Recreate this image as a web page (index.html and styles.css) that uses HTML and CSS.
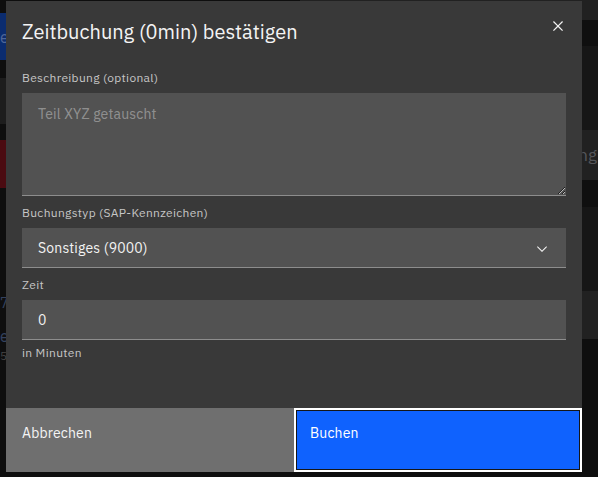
FILE: index.html
```html
<!DOCTYPE html>
<html lang="de">
<head>
    <meta charset="UTF-8">
    <meta name="viewport" content="width=device-width, initial-scale=1.0">
    <title>Zeitbuchung</title>
    <link rel="stylesheet" href="styles.css">
</head>
<body>
    <div class="page">
        <aside class="side">
            <div class="side-btn side-btn-primary"><span>e</span></div>
            <div class="side-field"></div>
            <div class="side-btn side-btn-danger"></div>
            <div class="side-meta">
                <span class="meta-num">7</span>
                <span class="meta-title">e</span>
                <span class="meta-sub">5</span>
            </div>
        </aside>
        <section class="list">
            <div class="list-row row-head"></div>
            <div class="list-row row-dark"></div>
            <div class="list-row row-mid"></div>
            <div class="list-row row-light"><span class="row-text">ng</span></div>
            <div class="list-row row-dark row-thin"></div>
            <div class="list-row row-mid"></div>
            <div class="list-row row-light row-short"></div>
        </section>
    </div>

    <div class="overlay">
        <div class="modal" role="dialog" aria-modal="true">
            <header class="modal-header">
                <h2 class="modal-title">Zeitbuchung (0min) bestätigen</h2>
                <button class="modal-close" aria-label="Schließen">
                    <svg width="20" height="20" viewBox="0 0 32 32" aria-hidden="true">
                        <path d="M24 9.4 22.6 8 16 14.6 9.4 8 8 9.4 14.6 16 8 22.6 9.4 24 16 17.4 22.6 24 24 22.6 17.4 16z" fill="currentColor"/>
                    </svg>
                </button>
            </header>

            <form class="modal-body" id="bookingForm">
                <div class="form-item">
                    <label class="form-label" for="description">Beschreibung (optional)</label>
                    <textarea class="field field-area" id="description" placeholder="Teil XYZ getauscht"></textarea>
                </div>

                <div class="form-item">
                    <label class="form-label" for="bookingType">Buchungstyp (SAP-Kennzeichen)</label>
                    <div class="select-wrap">
                        <select class="field field-select" id="bookingType">
                            <option value="9000">Sonstiges (9000)</option>
                        </select>
                        <svg class="select-chevron" width="16" height="16" viewBox="0 0 16 16" aria-hidden="true">
                            <path d="M8 11 3 6l.7-.7L8 9.6l4.3-4.3.7.7z" fill="currentColor"/>
                        </svg>
                    </div>
                </div>

                <div class="form-item">
                    <label class="form-label" for="minutes">Zeit</label>
                    <input class="field" type="number" id="minutes" value="0">
                    <div class="form-helper">in Minuten</div>
                </div>
            </form>

            <footer class="modal-footer">
                <button class="btn btn-secondary" type="button">Abbrechen</button>
                <button class="btn btn-primary is-focused" type="submit" form="bookingForm">Buchen</button>
            </footer>
        </div>
    </div>
</body>
</html>
```

FILE: styles.css
```css
* {
    box-sizing: border-box;
}

body {
    margin: 0;
    background-color: #0e0e0e;
    color: #f4f4f4;
    font-family: 'IBM Plex Sans', Roboto, 'Liberation Sans', sans-serif;
}

/* page behind the dialog */
.page {
    display: flex;
    height: 477px;
    overflow: hidden;
}

.side {
    width: 300px;
    padding: 13px 0 0 0;
    display: flex;
    flex-direction: column;
    align-items: flex-start;
}

.side-btn {
    width: 200px;
    display: flex;
    align-items: center;
}

.side-btn-primary {
    height: 47px;
    background: #0b2c6f;
    color: #4f6696;
    font-size: 16px;
}

.side-field {
    width: 200px;
    height: 46px;
    margin-top: 18px;
    background: #1d1d1d;
}

.side-btn-danger {
    height: 48px;
    margin-top: 16px;
    background: #4b0b11;
}

.side-meta {
    margin-top: 108px;
    display: flex;
    flex-direction: column;
    color: #34425f;
    font-size: 14px;
    line-height: 1;
}

.meta-title {
    margin-top: 18px;
    font-size: 16px;
}

.meta-sub {
    margin-top: 6px;
    font-size: 12px;
    color: #474747;
}

.list {
    flex: 1;
    display: flex;
    flex-direction: column;
}

.list-row {
    height: 84px;
    display: flex;
    align-items: center;
    justify-content: flex-end;
}

.row-head {
    height: 20px;
    background: #212121;
}

.row-dark {
    height: 26px;
    background: #0f0f0f;
}

.row-thin {
    height: 27px;
}

.row-mid {
    background: #161616;
}

.row-light {
    height: 50px;
    background: #212121;
}

.row-short {
    height: 48px;
}

.row-text {
    color: #55565a;
    font-size: 17px;
    margin-right: 1px;
}

/* dialog */
.overlay {
    position: fixed;
    inset: 0;
    padding: 1px 16px 5px 6px;
}

.modal {
    height: 471px;
    width: 576px;
    background: #393939;
    display: flex;
    flex-direction: column;
}

.modal-header {
    display: flex;
    justify-content: space-between;
    align-items: flex-start;
    padding: 17px 16px 0 16px;
}

.modal-title {
    margin: 0;
    font-size: 20px;
    line-height: 28px;
    font-weight: 400;
    color: #f4f4f4;
}

.modal-close {
    width: 32px;
    height: 32px;
    margin: -8px -8px 0 0;
    padding: 0;
    border: none;
    background: transparent;
    color: #f4f4f4;
    display: flex;
    align-items: center;
    justify-content: center;
    cursor: pointer;
}

.modal-body {
    padding: 24px 16px 0 16px;
    display: flex;
    flex-direction: column;
    gap: 9px;
}

.form-item {
    display: flex;
    flex-direction: column;
}

.form-label {
    font-size: 12px;
    line-height: 16px;
    letter-spacing: 0.32px;
    color: #c6c6c6;
    margin-bottom: 7px;
}

.field {
    width: 100%;
    height: 40px;
    padding: 0 16px;
    border: none;
    border-bottom: 1px solid #8d8d8d;
    background: #525252;
    color: #f4f4f4;
    font: inherit;
    font-size: 14px;
    letter-spacing: 0.16px;
    outline: none;
    appearance: none;
    -moz-appearance: textfield;
}

.field::-webkit-outer-spin-button,
.field::-webkit-inner-spin-button {
    -webkit-appearance: none;
    margin: 0;
}

.field-area {
    height: 103px;
    padding: 11px 16px;
    line-height: 20px;
    resize: vertical;
}

.field::placeholder {
    color: rgba(244, 244, 244, 0.4);
}

.select-wrap {
    position: relative;
}

.field-select {
    cursor: pointer;
}

.select-chevron {
    position: absolute;
    right: 16px;
    top: 13px;
    color: #f4f4f4;
    pointer-events: none;
}

.form-helper {
    margin-top: 5px;
    font-size: 12px;
    line-height: 16px;
    letter-spacing: 0.32px;
    color: #c6c6c6;
}

.modal-footer {
    margin-top: auto;
    display: flex;
    height: 64px;
}

.btn {
    flex: 1;
    height: 64px;
    border: none;
    padding: 16px 16px;
    text-align: left;
    font: inherit;
    font-size: 14px;
    line-height: 18px;
    letter-spacing: 0.16px;
    color: #f4f4f4;
    display: flex;
    align-items: flex-start;
    cursor: pointer;
}

.btn-secondary {
    background: #6f6f6f;
}

.btn-primary {
    background: #0f62fe;
    color: #ffffff;
}

.btn-primary.is-focused {
    border: 2px solid #ffffff;
    box-shadow: inset 0 0 0 1px #161616;
    padding: 14px 14px;
}
```
